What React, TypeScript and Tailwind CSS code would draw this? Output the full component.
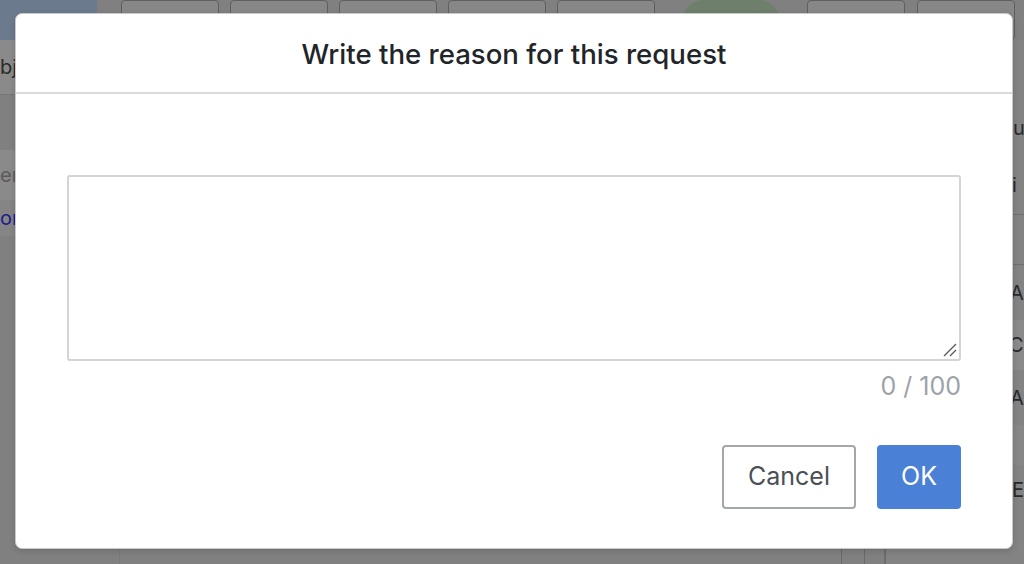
import React from "react";

function ToolbarButton({ w = 98 }: { w?: number }) {
  return (
    <div
      className="h-[40px] shrink-0 rounded-[4px] border border-[#5f5f5f] bg-[#878787]"
      style={{ width: w }}
    />
  );
}

export default function App() {
  return (
    <div
      className="relative h-[564px] w-[1024px] overflow-hidden bg-[#808080]"
      style={{ fontFamily: "Inter, 'Noto Sans', sans-serif" }}
    >
      {/* dimmed page behind the dialog */}
      <div className="flex h-full flex-col">
        <div className="flex h-[40px] items-start gap-[12px] pl-0">
          <div className="h-[40px] w-[97px] shrink-0 bg-[#6b7b8d]" />
          <div className="ml-[12px] flex gap-[11px]">
            <ToolbarButton />
            <ToolbarButton />
            <ToolbarButton />
            <ToolbarButton />
            <ToolbarButton />
          </div>
          <div className="ml-[16px] h-[40px] w-[96px] shrink-0 rounded-full bg-[#6e806c]" />
          <div className="ml-[16px] flex gap-[12px]">
            <ToolbarButton />
            <ToolbarButton />
          </div>
        </div>
        <div className="flex flex-1">
          <div className="flex w-[120px] shrink-0 flex-col border-r border-[#7a7a7a] bg-[#858585] text-[20px]">
            <div className="flex h-[55px] items-center border-b border-[#777] bg-[#8a8a8a] text-[#2a2a2a]">
              <span>bjects</span>
            </div>
            <div className="h-[55px] bg-[#808080]" />
            <div className="flex h-[50px] items-center bg-[#8a8a8a] text-[#5a5a5a]">
              <span>enter</span>
            </div>
            <div className="flex h-[36px] items-center bg-[#858585] text-[#1c1c8a]">
              <span>orders</span>
            </div>
            <div className="flex-1 bg-[#808080]" />
          </div>
          <div className="flex-1" />
          <div className="flex w-[140px] shrink-0 flex-col border-l border-[#6f6f6f] bg-[#838383] text-[20px] text-[#2a2a2a]">
            <div className="h-[60px]" />
            <div className="flex h-[55px] items-center pl-[128px]">u</div>
            <div className="flex h-[60px] items-center border-b border-[#6f6f6f] pl-[127px]">i</div>
            <div className="h-[50px] border-b border-[#6f6f6f]" />
            <div className="flex h-[55px] items-center pl-[125px]">A</div>
            <div className="flex h-[50px] items-center bg-[#8a8a8a] pl-[124px]">C</div>
            <div className="flex h-[55px] items-center pl-[125px]">A</div>
            <div className="h-[40px] bg-[#878787]" />
            <div className="flex h-[50px] items-center pl-[127px]">E</div>
            <div className="flex-1" />
          </div>
        </div>
      </div>
      <div className="pointer-events-none absolute bottom-0 left-[841px] h-[15px] w-[45px] border-x border-[#6a6a6a]">
        <div className="ml-[22px] h-full w-px bg-[#6a6a6a]" />
      </div>

      {/* dialog */}
      <div className="absolute left-[15px] top-[13px] flex h-[536px] w-[998px] flex-col rounded-[7px] border border-[#c9c9cd] bg-white shadow-[0_2px_6px_rgba(0,0,0,0.15)]">
        <div className="flex h-[80px] shrink-0 items-center justify-center border-b-2 border-[#dadade] pt-[4px]">
          <h2 className="text-[27.6px] font-medium text-[#212529]">
            Write the reason for this request
          </h2>
        </div>
        <div className="flex flex-1 flex-col px-[51px] pt-[81px]">
          <div className="relative">
            <textarea
              className="block h-[186px] w-full resize-none rounded-[3px] border-2 border-[#d3d3d8] bg-white px-3 py-2 text-[20px] outline-none"
              maxLength={100}
            />
            <svg
              className="pointer-events-none absolute bottom-[4px] right-[4px]"
              width="14"
              height="14"
              viewBox="0 0 14 14"
            >
              <line x1="1" y1="13" x2="13" y2="1" stroke="#555" strokeWidth="1.2" />
              <line x1="7" y1="13" x2="13" y2="7" stroke="#555" strokeWidth="1.2" />
            </svg>
          </div>
          <div className="mt-[12px] text-right text-[25px] leading-[26px] text-[#9da2a8]">
            0 / 100
          </div>
          <div className="mt-[46px] flex justify-end gap-[21px]">
            <button className="flex h-[64px] w-[134px] items-center justify-center rounded-[4px] border-2 border-[#a3a7ab] bg-white text-[25px] text-[#4a5056]">
              Cancel
            </button>
            <button className="flex h-[64px] w-[84px] items-center justify-center rounded-[4px] bg-[#4b80d7] text-[25px] text-white">
              OK
            </button>
          </div>
        </div>
      </div>
    </div>
  );
}
